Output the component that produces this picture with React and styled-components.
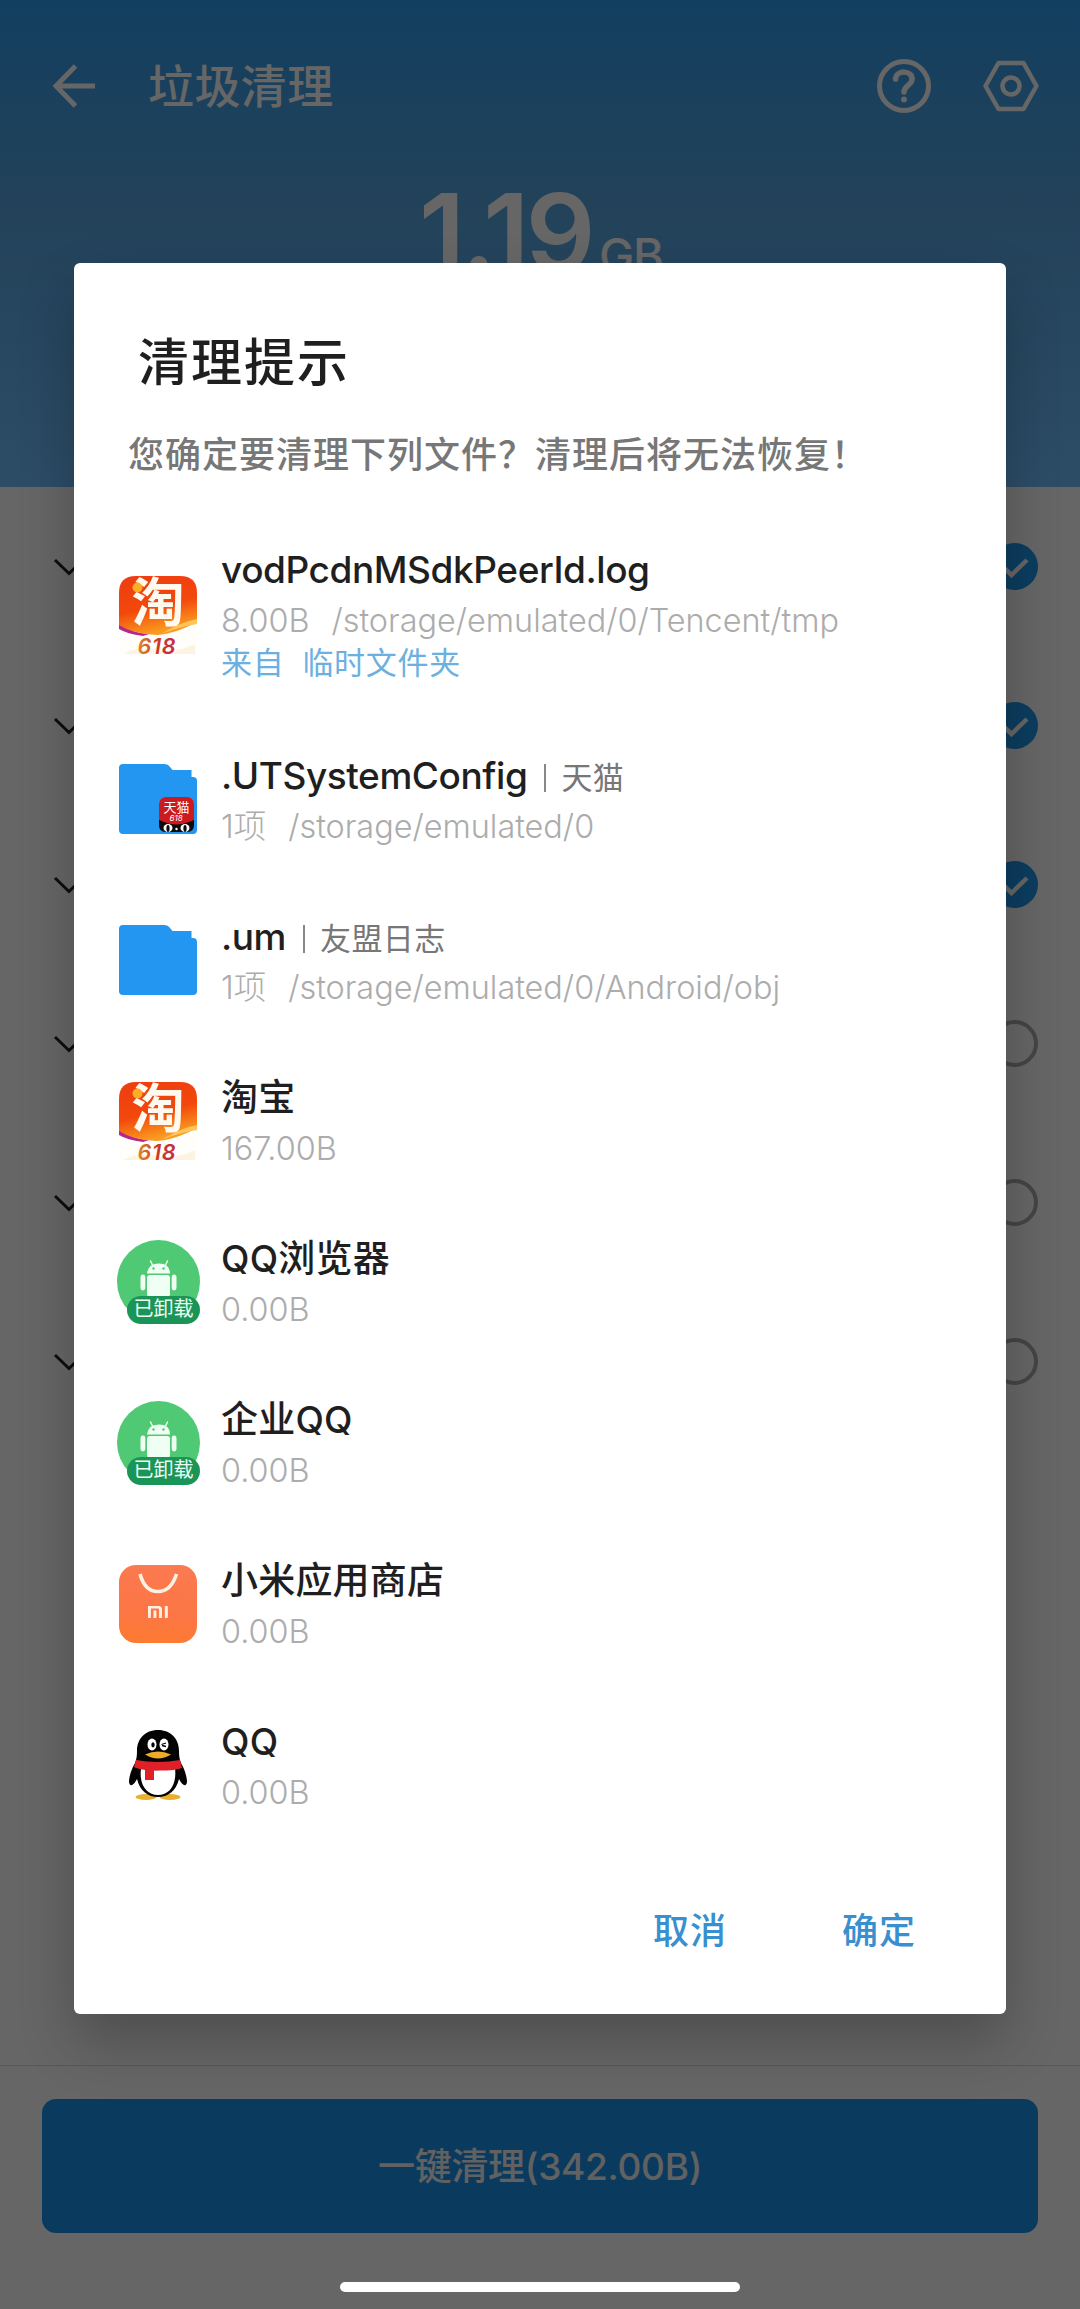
import React from 'react';
import styled, { createGlobalStyle, css } from 'styled-components';


const fileList = [
  { icon: 'taobao', name: 'vodPcdnMSdkPeerId.log', size: '8.00B', path: '/storage/emulated/0/Tencent/tmp', from: '临时文件夹' },
  { icon: 'tmallFolder', name: '.UTSystemConfig', owner: '天猫', size: '1项', path: '/storage/emulated/0' },
  { icon: 'folder', name: '.um', owner: '友盟日志', size: '1项', path: '/storage/emulated/0/Android/obj' },
  { icon: 'taobao', name: '淘宝', size: '167.00B' },
  { icon: 'removed', name: 'QQ浏览器', size: '0.00B' },
  { icon: 'removed', name: '企业QQ', size: '0.00B' },
  { icon: 'store', name: '小米应用商店', size: '0.00B' },
  { icon: 'qq', name: 'QQ', size: '0.00B' },
];

const groupList = [true, true, true, false, false, false];

const TaobaoIcon = () => (
  <svg width="78" height="78" viewBox="0 0 78 78">
    <defs>
      <linearGradient id="tbRed" x1="0" y1="0" x2="0.3" y2="1">
        <stop offset="0" stopColor="#ee3c10" />
        <stop offset="0.6" stopColor="#f2480c" />
        <stop offset="1" stopColor="#fb9a1e" />
      </linearGradient>
      <linearGradient id="tbNum" x1="0" y1="0" x2="1" y2="0">
        <stop offset="0" stopColor="#dd8a2c" />
        <stop offset="0.5" stopColor="#cf3a22" />
        <stop offset="1" stopColor="#c22a4a" />
      </linearGradient>
      <clipPath id="tbClip">
        <path d="M17 0H61Q78 0 78 17V78H0V17Q0 0 17 0Z" />
      </clipPath>
    </defs>
    <g clipPath="url(#tbClip)">
      <rect width="78" height="78" fill="#fffefb" />
      <path d="M4 78Q20 70 38 74T76 68V78Z" fill="#fdf3e2" />
      <path d="M0 47Q12 57 30 58L24 60Q8 58 0 53Z" fill="#b5278c" />
      <path d="M0 0H78V46Q56 58 38 59Q14 58 0 49Z" fill="url(#tbRed)" />
      <path d="M42 58Q62 46 78 43V48Q60 51 42 58Z" fill="#ffc45a" />
    </g>
    <text x="12.500" y="46" fontSize="53" fontWeight="700" fill="#fffaf0">淘</text>
    <circle cx="18.500" cy="11.500" r="5" fill="#fdac28" />
    <text x="18.500" y="77.500" fontSize="21.500" fontWeight="600" fontStyle="italic" fill="url(#tbNum)" textLength="38">618</text>
  </svg>
);

const FolderIcon = ({ tmall }) => (
  <svg width="78" height="70" viewBox="0 0 78 70">
    <path d="M4 0H45Q49 0 51 3L53.500 6H72.500V13H74Q78 13 78 17V66Q78 70 74 70H4Q0 70 0 66V4Q0 0 4 0Z" fill="#2296f0" />
    {tmall ?
      <g>
        <rect x="40" y="33" width="35" height="35" rx="7" fill="#cc1a1f" />
        <path d="M40 56L45 58Q57 63 70 58L75 56V61Q75 68 68 68H47Q40 68 40 61Z" fill="#0b0b0d" />
        <ellipse cx="49" cy="64" rx="4.500" ry="4" fill="#fff" />
        <ellipse cx="66" cy="64" rx="4.500" ry="4" fill="#fff" />
        <ellipse cx="49" cy="64.500" rx="1.600" ry="3.400" fill="#0b0b0d" />
        <ellipse cx="66" cy="64.500" rx="1.600" ry="3.400" fill="#0b0b0d" />
        <circle cx="57.500" cy="65" r="1.200" fill="#fff" />
        <text x="44.500" y="48" fontSize="13" fill="#fff">天猫</text>
        <text x="50.500" y="57" fontSize="8" fontStyle="italic" fill="#fff">618</text>
      </g>
      : null}
  </svg>
);

const AndroidIcon = () => (
  <svg width="83" height="83" viewBox="0 0 83 83">
    <circle cx="41.500" cy="41.500" r="41.500" fill="#50c974" />
    <path d="M36 26L33.500 21M48 26L50.500 21" stroke="#effff3" strokeWidth="1.500" strokeLinecap="round" />
    <path d="M30 33.500Q31 23.500 42 23.500T53 33.500Z" fill="#effff3" />
    <circle cx="36.500" cy="28.500" r="1.200" fill="#50c974" />
    <circle cx="46.500" cy="28.500" r="1.200" fill="#50c974" />
    <rect x="30" y="35" width="23" height="22" rx="3" fill="#effff3" />
    <rect x="23.500" y="34.500" width="4.800" height="16" rx="2.400" fill="#effff3" />
    <rect x="54.700" y="34.500" width="4.800" height="16" rx="2.400" fill="#effff3" />
  </svg>
);

const StoreIcon = () => (
  <svg width="78" height="78" viewBox="0 0 78 78">
    <defs>
      <linearGradient id="miBag" x1="0.300" y1="0" x2="0.200" y2="1">
        <stop offset="0" stopColor="#fb7a50" />
        <stop offset="0.600" stopColor="#fc7645" />
        <stop offset="1" stopColor="#fd7b30" />
      </linearGradient>
    </defs>
    <rect width="78" height="78" rx="17" fill="url(#miBag)" />
    <path d="M21 9C24 20 30 26.500 39 26.500S54 20 57.500 9" fill="none" stroke="#fff0e4" strokeWidth="3.600" />
    <g fill="#fff0e4">
      <rect x="29" y="41" width="2.900" height="12" />
      <path d="M31 41H39.500Q43 41 43 44.500V53H40.100V44.800Q40.100 43.500 39 43.500H31Z" />
      <rect x="34.500" y="45.500" width="2.900" height="7.500" />
      <rect x="45.800" y="41" width="3" height="12" />
    </g>
  </svg>
);

const QQIcon = () => (
  <svg width="78" height="78" viewBox="0 0 78 78">
    <ellipse cx="27" cy="71" rx="10.500" ry="3" fill="#e8b02e" />
    <ellipse cx="51" cy="71" rx="10.500" ry="3" fill="#e8b02e" />
    <path d="M39 4C26 4 18 13 18 25C18 30 17.500 33 16 37C12 44 10 51 10 56C11 62 15 59 18 53C21 65 29 71 39 71S57 65 60 53C63 59 67 62 68 56C68 51 66 44 62 37C60.500 33 60 30 60 25C60 13 52 4 39 4Z" fill="#030303" />
    <path d="M22 43Q39 46 56 42C58 58 51 69 39 69S20 58 22 43Z" fill="#fff" />
    <ellipse cx="33" cy="18.500" rx="4.500" ry="6" fill="#fff" />
    <ellipse cx="45" cy="18.500" rx="4.500" ry="6" fill="#fff" />
    <ellipse cx="34" cy="18.800" rx="1.700" ry="2.600" fill="#030303" />
    <path d="M42.500 18.500L47 17M43 19.500L47 20.500" stroke="#030303" strokeWidth="1.300" />
    <path d="M26 28.500Q39 22.500 52 28.500Q39 36.500 26 28.500Z" fill="#eeab27" />
    <path d="M17 34Q39 38 61 34L63 42Q56 45 35 44.500V54H26V43.500Q19 43 15 41Z" fill="#df2029" />
  </svg>
);

const RowIcon = ({ type }) => {
  if (type === 'taobao') return <TaobaoIcon />;
  if (type === 'tmallFolder') return <FolderIcon tmall />;
  if (type === 'folder') return <FolderIcon />;
  if (type === 'store') return <StoreIcon />;
  if (type === 'qq') return <QQIcon />;
  return (
    <>
      <AndroidIcon />
      <RemovedTag>已卸载</RemovedTag>
    </>
  );
};

const FileRow = ({ data }) => (
  <Row $tall={!!data.from}>
    <IconBox><RowIcon type={data.icon} /></IconBox>
    <RowText>
      <RowName $tight={!!data.path}>
        {data.name}
        {data.owner ? <><Bar /><Owner>{data.owner}</Owner></> : null}
      </RowName>
      <RowSub>
        <span>{data.size}</span>
        {data.path ? <span>{data.path}</span> : null}
      </RowSub>
      {data.from ? <RowFrom><span>来自</span><span>{data.from}</span></RowFrom> : null}
    </RowText>
  </Row>
);

const App = () => {
  return (
    <Screen>
      <GlobalStyle />
      <Header>
        <TopBar>
          <svg width="44" height="44" viewBox="0 0 44 44" fill="none" stroke="#fff" strokeWidth="5">
            <path d="M43 22H4M23.500 2L4 22L23.500 42" />
          </svg>
          <PageTitle>垃圾清理</PageTitle>
          <svg width="56" height="56" viewBox="0 0 56 56" fill="none" stroke="#fff" strokeWidth="5" strokeLinecap="round">
            <circle cx="28" cy="28" r="24.500" />
            <path d="M19.500 21C20 11.500 37 12 36 21.500C35.500 27.500 28 27.500 28 34" strokeWidth="5.500" />
            <circle cx="28" cy="41.500" r="3" fill="#fff" stroke="none" />
          </svg>
          <SettingIcon width="58" height="56" viewBox="0 0 58 56" fill="none" stroke="#fff" strokeWidth="4.500" strokeLinejoin="round">
            <path d="M16.500 5H41.500L54.500 28L41.500 51H16.500L3.500 28Z" />
            <circle cx="29" cy="28" r="8.500" />
          </SettingIcon>
        </TopBar>
        <Total>1.19<Unit>GB</Unit></Total>
      </Header>
      <Groups>
        {groupList.map((checked, i) => (
          <Group key={i}>
            <svg width="30" height="20" viewBox="0 0 30 20" fill="none" stroke="#222" strokeWidth="3">
              <path d="M1 3L15 16.500L29 3" />
            </svg>
            <Check $checked={checked}>
              {checked ?
                <svg width="47" height="47" viewBox="0 0 47 47" fill="none" stroke="#fff" strokeWidth="4.500">
                  <path d="M12.500 24L20.500 32L36 17" />
                </svg>
                : null}
            </Check>
          </Group>
        ))}
      </Groups>
      <Footer>
        <CleanBtn>一键清理(342.00B)</CleanBtn>
      </Footer>
      <Dim>
        <Dialog>
          <DialogTitle>清理提示</DialogTitle>
          <DialogDesc>您确定要清理下列文件？清理后将无法恢复！</DialogDesc>
          <FileList>
            {fileList.map((data, i) => <FileRow key={i} data={data} />)}
          </FileList>
          <DialogBtns>
            <TextBtn>取消</TextBtn>
            <TextBtn>确定</TextBtn>
          </DialogBtns>
        </Dialog>
        <HomeBar />
      </Dim>
    </Screen>
  );
};

export default App;


const GlobalStyle = createGlobalStyle`
  * {
    box-sizing: border-box;
  }
  body {
    margin: 0;
    font-family: Inter, "Noto Sans CJK SC", sans-serif;
  }
  svg {
    display: block;
    flex-shrink: 0;
    overflow: visible;
  }
`

const Screen = styled.div`
  position: relative;
  display: flex;
  flex-direction: column;
  width: 1080px;
  height: 2309px;
  overflow: hidden;
  background-color: #fff;
`
const Header = styled.header`
  height: 487px;
  flex-shrink: 0;
  background: linear-gradient(#2e9ef0, #56a5e0 40%, #70c0ff);
`
const TopBar = styled.div`
  display: flex;
  align-items: center;
  height: 172px;
  padding: 0 40px 0 52px;
`
const PageTitle = styled.h1`
  flex: 1;
  margin: 0 0 0 52px;
  font-size: 46px;
  font-weight: 500;
  letter-spacing: 0.4px;
  line-height: 60px;
  color: #fff;
`
const SettingIcon = styled.svg`
  margin-left: 50px;
`
const Total = styled.div`
  display: flex;
  justify-content: center;
  align-items: baseline;
  padding-left: 2px;
  font-size: 109px;
  font-weight: 600;
  line-height: 120px;
  letter-spacing: -3.5px;
  color: #fff;
`
const Unit = styled.span`
  margin-left: 7px;
  font-size: 47px;
  font-weight: 500;
  letter-spacing: -1px;
`
const Groups = styled.div`
  flex: 1;
`
const Group = styled.div`
  display: flex;
  justify-content: space-between;
  align-items: center;
  height: 159px;
  padding: 0 42px 0 54px;
`
const Check = styled.div`
  width: 47px;
  height: 47px;
  border-radius: 50%;
  ${({$checked}) => $checked ? css`
    background-color: #1f98ee;
  ` : css`
    border: 4px solid #adadad;
  `}
`
const Footer = styled.footer`
  display: flex;
  height: 244px;
  padding: 33px 42px 76px;
  border-top: 1px solid #dcdcdc;
`
const CleanBtn = styled.button`
  flex: 1;
  height: 134px;
  padding: 0 0 4px;
  border: none;
  border-radius: 14px;
  background-color: #1b93ed;
  color: #f2f2f2;
  font-family: inherit;
  font-size: 37px;
  font-weight: 500;
  letter-spacing: -0.3px;
`
const Dim = styled.div`
  position: absolute;
  inset: 0;
  display: flex;
  flex-direction: column;
  align-items: center;
  padding-top: 263px;
  background-color: rgba(0, 0, 0, 0.6);
`
const Dialog = styled.section`
  display: flex;
  flex-direction: column;
  width: 932px;
  height: 1751px;
  border-radius: 6px;
  background-color: #fff;
  box-shadow: 0 28px 56px rgba(0, 0, 0, 0.24);
`
const DialogTitle = styled.h2`
  margin: 67px 0 0 64px;
  font-size: 51px;
  font-weight: 500;
  letter-spacing: 2px;
  line-height: 66px;
  color: #1f1f1f;
`
const DialogDesc = styled.p`
  margin: 34px 0 0 54px;
  font-size: 36px;
  font-weight: 500;
  letter-spacing: 1px;
  line-height: 50px;
  color: #777;
`
const FileList = styled.ul`
  margin: 31px 0 0;
  padding: 0;
  list-style: none;
`
const Row = styled.li`
  display: flex;
  align-items: center;
  height: ${({$tall}) => $tall ? 207 : 161}px;
  padding-left: 39px;
`
const IconBox = styled.div`
  position: relative;
  display: flex;
  justify-content: center;
  width: 90px;
`
const RemovedTag = styled.span`
  position: absolute;
  right: 3px;
  bottom: -1px;
  width: 73px;
  height: 28px;
  border-radius: 14px;
  background-color: #1b9557;
  color: #e9fff2;
  font-size: 20px;
  line-height: 27px;
  text-align: center;
`
const RowText = styled.div`
  display: flex;
  flex-direction: column;
  margin-left: 18px;
  padding-top: 2px;
`
const RowName = styled.div`
  display: flex;
  align-items: center;
  height: 48px;
  font-size: 37px;
  font-weight: 500;
  line-height: 48px;
  letter-spacing: ${({$tight}) => $tight ? -0.43 : 0.2}px;
  color: #1f1f1f;
`
const Bar = styled.i`
  width: 2px;
  height: 28px;
  margin: 4px 15px 0 17px;
  background-color: #888;
`
const Owner = styled.span`
  padding-top: 4px;
  font-size: 31px;
  font-weight: 400;
  letter-spacing: 0.4px;
  color: #777;
`
const RowSub = styled.div`
  display: flex;
  gap: 22px;
  height: 48px;
  padding-top: 3px;
  font-size: 32.4px;
  font-weight: 300;
  line-height: 48px;
  color: #acacac;
`
const RowFrom = styled.div`
  display: flex;
  gap: 18px;
  height: 44px;
  padding-top: 1px;
  font-size: 31px;
  letter-spacing: 0.7px;
  line-height: 40px;
  color: #6bb0e0;
`
const DialogBtns = styled.div`
  display: flex;
  justify-content: flex-end;
  gap: 115px;
  margin-top: 61px;
  padding-right: 90px;
`
const TextBtn = styled.button`
  padding: 0;
  border: none;
  background: none;
  color: #3890d0;
  font-family: inherit;
  font-size: 36px;
  font-weight: 500;
  letter-spacing: 1px;
  line-height: 50px;
`
const HomeBar = styled.div`
  width: 400px;
  height: 10px;
  margin-top: 268px;
  border-radius: 5px;
  background-color: #fff;
`
